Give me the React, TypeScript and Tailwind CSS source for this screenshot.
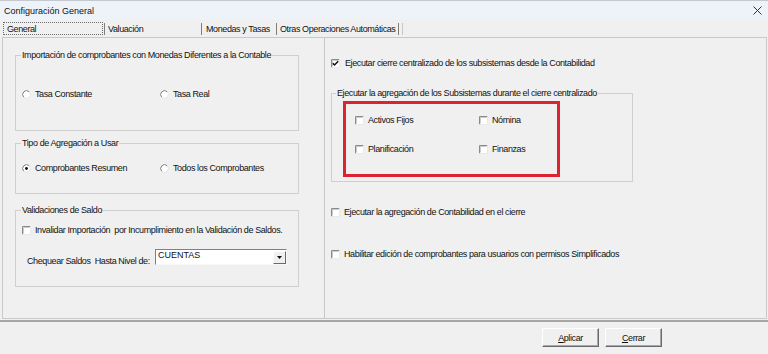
import React from "react";

function Check({ checked = false }: { checked?: boolean }) {
  return (
    <svg width="9" height="9" viewBox="0 0 9 9" className="shrink-0">
      <rect x="0" y="0" width="9" height="9" fill="#ffffff" />
      <path d="M0.5 8.5V0.5H8.5" stroke="#8a8a8a" fill="none" />
      <path d="M1.5 7.5V1.5H7.5" stroke="#c9c9c9" fill="none" />
      <path d="M0.5 8.5H8.5V0.5" stroke="#e9e9e9" fill="none" />
      {checked && (
        <path d="M1.8 4.2 L3.5 6 L7.2 2.2" stroke="#111" strokeWidth="1.5" fill="none" />
      )}
    </svg>
  );
}

function Radio({ checked = false }: { checked?: boolean }) {
  return (
    <svg width="9" height="9" viewBox="0 0 12 12" className="shrink-0">
      <circle cx="6" cy="6" r="5" fill="#ffffff" />
      <path d="M2.4 9.6 A5 5 0 0 1 9.6 2.4" stroke="#7a7a7a" strokeWidth="1.3" fill="none" />
      <path d="M9.6 2.4 A5 5 0 0 1 2.4 9.6" stroke="#e4e4e4" strokeWidth="1.3" fill="none" />
      {checked && <circle cx="6" cy="6" r="1.9" fill="#111" />}
    </svg>
  );
}

function Sep() {
  return <div className="w-[1px] h-[12px] bg-[#7d7d7d] shrink-0" />;
}

export default function App() {
  return (
    <div className="w-[768px] h-[354px] overflow-hidden bg-[#f0f0f0] text-[#111] font-['Liberation_Sans',Arial,sans-serif] text-[9px] tracking-[-0.4px] leading-[12px] whitespace-nowrap flex flex-col">
      <div className="h-[1px] bg-[#c3c8cf] shrink-0" />
      {/* title bar */}
      <div className="h-[19px] shrink-0 bg-[#eef3fa] flex items-center justify-between pl-[4px] pr-[6px]">
        <span className="text-[9px] tracking-[0px]">Configuración General</span>
        <svg width="9" height="9" viewBox="0 0 9 9">
          <path d="M0.5 0.5 L8.5 8.5 M8.5 0.5 L0.5 8.5" stroke="#333" strokeWidth="1" />
        </svg>
      </div>
      {/* tabs */}
      <div className="h-[17px] shrink-0 flex items-center pl-[3px]">
        <div className="w-[100px] h-[13px] border border-dotted border-[#6a6a6a] pl-[3px] flex items-center shrink-0">
          General
        </div>
        <div className="w-[1px] shrink-0" />
        <Sep />
        <div className="w-[96px] pl-[3px] shrink-0">Valuación</div>
        <Sep />
        <div className="w-[74px] pl-[4px] shrink-0">Monedas y Tasas</div>
        <Sep />
        <div className="w-[121px] pl-[3px] shrink-0">Otras Operaciones Automáticas</div>
        <Sep />
        <div className="w-[3px] shrink-0" />
        <div className="w-[1px] h-[12px] bg-[#c8c8c8] shrink-0" />
      </div>
      {/* panel */}
      <div className="h-[282px] shrink-0 ml-[2px] mr-[1px] border border-[#c9c9c9] flex">
        {/* left column */}
        <div className="w-[322px] shrink-0 border-r border-[#c9c9c9] pl-[12px] pt-[11px] flex flex-col">
          <fieldset className="w-[284px] h-[82px] border border-[#cfcfcf]">
            <legend className="ml-[5px] px-[1px] leading-[12px]">
              Importación de comprobantes con Monedas Diferentes a la Contable
            </legend>
            <div className="flex items-center h-[12px] mt-[27px] pl-[6px]">
              <div className="w-[138px] flex items-center">
                <Radio />
                <span className="ml-[4px]">Tasa Constante</span>
              </div>
              <div className="flex items-center">
                <Radio />
                <span className="ml-[4px]">Tasa Real</span>
              </div>
            </div>
          </fieldset>
          <fieldset className="w-[284px] h-[57px] mt-[6px] border border-[#cfcfcf]">
            <legend className="ml-[5px] px-[1px] leading-[12px]">Tipo de Agregación a Usar</legend>
            <div className="flex items-center h-[12px] mt-[13px] pl-[6px]">
              <div className="w-[138px] flex items-center">
                <Radio checked />
                <span className="ml-[4px]">Comprobantes Resumen</span>
              </div>
              <div className="flex items-center">
                <Radio />
                <span className="ml-[4px]">Todos los Comprobantes</span>
              </div>
            </div>
          </fieldset>
          <fieldset className="w-[284px] h-[83px] mt-[10px] border border-[#cfcfcf]">
            <legend className="ml-[5px] px-[1px] leading-[12px]">Validaciones de Saldo</legend>
            <div className="flex items-center h-[12px] mt-[8px] pl-[6px]">
              <Check />
              <span className="ml-[4px] whitespace-pre">
                Invalidar Importación  por Incumplimiento en la Validación de Saldos.
              </span>
            </div>
            <div className="flex items-start mt-[13px] pl-[11px]">
              <span className="w-[128px] mt-[6px] whitespace-pre shrink-0">Chequear Saldos  Hasta Nivel de:</span>
              <div className="w-[132px] h-[16px] bg-white border border-t-[#808080] border-l-[#808080] border-r-[#f8f8f8] border-b-[#f8f8f8] flex items-start justify-between">
                <span className="pl-[2px] leading-[11px] tracking-[0px]">CUENTAS</span>
                <div className="w-[13px] h-[13px] mt-[0.5px] mr-[0.5px] bg-[#f0f0f0] border border-t-white border-l-white border-r-[#6a6a6a] border-b-[#6a6a6a] flex items-center justify-center">
                  <svg width="5" height="3" viewBox="0 0 5 3">
                    <path d="M0 0 H5 L2.5 3 Z" fill="#111" />
                  </svg>
                </div>
              </div>
            </div>
          </fieldset>
        </div>
        {/* right column */}
        <div className="flex-1 pl-[6px] flex flex-col">
          <div className="flex items-center h-[12px] mt-[19px]">
            <Check checked />
            <span className="ml-[5px]">Ejecutar cierre centralizado de los subsistemas desde la Contabilidad</span>
          </div>
          <fieldset className="w-[302px] h-[95px] mt-[18px] border border-[#cfcfcf]">
            <legend className="ml-[4px] px-[1px] leading-[12px]">
              Ejecutar la agregación de los Subsistemas durante el cierre centralizado
            </legend>
            <div className="ml-[11px] mt-[2px] w-[217px] h-[76px] border-[3px] border-[#dc2430] pl-[9px] pt-[10px] flex flex-col gap-[17px]">
              <div className="flex items-center h-[12px]">
                <div className="w-[124px] flex items-center">
                  <Check />
                  <span className="ml-[4px]">Activos Fijos</span>
                </div>
                <div className="flex items-center">
                  <Check />
                  <span className="ml-[4px]">Nómina</span>
                </div>
              </div>
              <div className="flex items-center h-[12px]">
                <div className="w-[124px] flex items-center">
                  <Check />
                  <span className="ml-[4px]">Planificación</span>
                </div>
                <div className="flex items-center">
                  <Check />
                  <span className="ml-[4px]">Finanzas</span>
                </div>
              </div>
            </div>
          </fieldset>
          <div className="flex items-center h-[12px] mt-[24px]">
            <Check />
            <span className="ml-[4px]">Ejecutar la agregación de Contabilidad en el cierre</span>
          </div>
          <div className="flex items-center h-[12px] mt-[30px]">
            <Check />
            <span className="ml-[4px]">Habilitar edición de comprobantes para usuarios con permisos Simplificados</span>
          </div>
        </div>
      </div>
      <div className="h-[2px] mt-[1px] bg-[#a5a5a5] shrink-0" />
      <div className="flex justify-end gap-[6px] pr-[106px] pt-[6px]">
        <button className="w-[57px] h-[19px] bg-[#f0f0f0] border border-t-white border-l-white border-r-[#6a6a6a] border-b-[#6a6a6a] shadow-[inset_-1px_-1px_0_#a8a8a8] flex items-center justify-center">
          <span><span className="underline">A</span>plicar</span>
        </button>
        <button className="w-[57px] h-[19px] bg-[#f0f0f0] border border-t-white border-l-white border-r-[#6a6a6a] border-b-[#6a6a6a] shadow-[inset_-1px_-1px_0_#a8a8a8] flex items-center justify-center">
          <span><span className="underline">C</span>errar</span>
        </button>
      </div>
    </div>
  );
}
